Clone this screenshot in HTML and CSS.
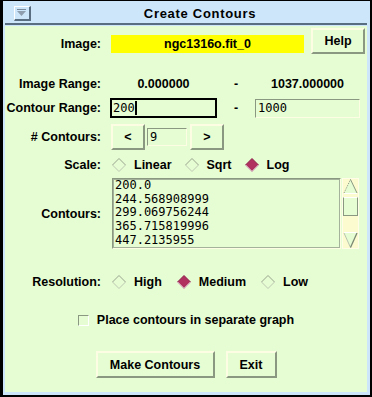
FILE: index.html
```html
<!DOCTYPE html>
<html lang="en">
<head>
    <meta charset="UTF-8">
    <title>Create Contours</title>
    <link rel="stylesheet" href="styles.css">
</head>
<body>
    <div class="frame">
        <div class="titlebar">
            <div class="menu-btn">
                <svg width="13" height="11" viewBox="0 0 13 11">
                    <rect x="2" y="2" width="9" height="1" fill="#7a8a9a"/>
                    <polygon points="2,4 11,4 6.5,9" fill="#8e9eae"/>
                </svg>
            </div>
            <div class="title">Create Contours</div>
        </div>

        <div class="panel">
            <div class="row row-image">
                <span class="label">Image:</span>
                <span class="image-name">ngc1316o.fit_0</span>
                <button class="btn btn-help">Help</button>
            </div>

            <div class="row row-range">
                <span class="label">Image Range:</span>
                <span class="value">0.000000</span>
                <span class="dash">-</span>
                <span class="value value-max">1037.000000</span>
            </div>

            <div class="row row-contour-range">
                <span class="label">Contour Range:</span>
                <span class="field field-focus">200<span class="caret"></span></span>
                <span class="dash">-</span>
                <span class="field field-max">1000</span>
            </div>

            <div class="row row-count">
                <span class="label"># Contours:</span>
                <button class="btn btn-step btn-prev">&lt;</button>
                <span class="field field-count">9</span>
                <button class="btn btn-step btn-next">&gt;</button>
            </div>

            <div class="row row-radio">
                <span class="label">Scale:</span>
                <div class="options">
                    <span class="option"><svg class="diamond" viewBox="0 0 14 14"><polyline points="0.5,7 7,0.5 13.5,7" class="d-dark"/><polyline points="0.5,7 7,13.5 13.5,7" class="d-light"/></svg>Linear</span>
                    <span class="option"><svg class="diamond" viewBox="0 0 14 14"><polyline points="0.5,7 7,0.5 13.5,7" class="d-dark"/><polyline points="0.5,7 7,13.5 13.5,7" class="d-light"/></svg>Sqrt</span>
                    <span class="option"><svg class="diamond" viewBox="0 0 14 14"><polygon points="7,0.5 13.5,7 7,13.5 0.5,7" class="d-on"/><polyline points="0.5,7 7,13.5 13.5,7" class="d-rim"/></svg>Log</span>
                </div>
            </div>

            <div class="row row-list">
                <span class="label">Contours:</span>
                <div class="list">
                    <div>200.0</div>
                    <div>244.568908999</div>
                    <div>299.069756244</div>
                    <div>365.715819996</div>
                    <div>447.2135955</div>
                </div>
                <svg class="scrollbar" width="17" height="71" viewBox="0 0 17 71">
                    <rect x="0" y="0" width="17" height="71" fill="#fbfbcf"/>
                    <rect x="0.5" y="0.5" width="16" height="70" fill="none" stroke="#fffde8"/>
                    <polygon points="8.5,1.5 15,15 2,15" fill="#e6fcd2"/>
                    <polyline points="2,15 8.5,1.5" fill="none" stroke="#8a9882" stroke-dasharray="1 1"/>
                    <polyline points="8.5,1.5 15,15" fill="none" stroke="#8a9882"/>
                    <line x1="2" y1="15.5" x2="15" y2="15.5" stroke="#ffffff"/>
                    <rect x="1.5" y="19.5" width="14" height="18" fill="#e6fcd2" stroke="#8a9882"/>
                    <line x1="1.5" y1="19.5" x2="15.5" y2="19.5" stroke="#ffffff"/>
                    <polygon points="2,55 15,55 8.5,69.5" fill="#e6fcd2"/>
                    <line x1="2" y1="54.5" x2="15" y2="54.5" stroke="#ffffff"/>
                    <polyline points="2,55 8.5,69.5" fill="none" stroke="#b8c4b0"/>
                    <polyline points="15,55 8.5,69.5" fill="none" stroke="#7a8872" stroke-width="1.3"/>
                </svg>
            </div>

            <div class="row row-radio row-res">
                <span class="label">Resolution:</span>
                <div class="options">
                    <span class="option"><svg class="diamond" viewBox="0 0 14 14"><polyline points="0.5,7 7,0.5 13.5,7" class="d-dark"/><polyline points="0.5,7 7,13.5 13.5,7" class="d-light"/></svg>High</span>
                    <span class="option"><svg class="diamond" viewBox="0 0 14 14"><polygon points="7,0.5 13.5,7 7,13.5 0.5,7" class="d-on"/><polyline points="0.5,7 7,13.5 13.5,7" class="d-rim"/></svg>Medium</span>
                    <span class="option"><svg class="diamond" viewBox="0 0 14 14"><polyline points="0.5,7 7,0.5 13.5,7" class="d-dark"/><polyline points="0.5,7 7,13.5 13.5,7" class="d-light"/></svg>Low</span>
                </div>
            </div>

            <div class="row row-check">
                <span class="checkbox"></span>
                <span>Place contours in separate graph</span>
            </div>

            <div class="row row-buttons">
                <button class="btn btn-make">Make Contours</button>
                <button class="btn btn-exit">Exit</button>
            </div>
        </div>
    </div>
</body>
</html>
```

FILE: styles.css
```css
body, html {
    margin: 0;
    padding: 0;
    background: #000;
    font-family: "Liberation Sans", Arial, sans-serif;
    color: #000;
}

.frame {
    margin: 1px 2px 0 3px;
    height: 389px;
    padding: 2px 3px 3px 2px;
    background: #cde6fa;
}

/* title bar */
.titlebar {
    height: 20px;
    display: flex;
    align-items: center;
    border-bottom: 2px solid #5a6e82;
    margin-bottom: 1px;
}

.menu-btn {
    width: 17px;
    height: 15px;
    margin-left: 9px;
    box-sizing: border-box;
    border-style: solid;
    border-width: 1px 2px 2px 1px;
    border-color: #fff #5a6e82 #5a6e82 #fff;
    display: flex;
}

.title {
    flex: 1;
    text-align: center;
    font-weight: bold;
    font-size: 13px;
    letter-spacing: 0.7px;
    padding-left: 2px;
}

/* main panel */
.panel {
    background: #e6fcd2;
    height: 366px;
    box-sizing: border-box;
    padding-top: 2px;
}

.row {
    display: flex;
    align-items: center;
    font-weight: bold;
    font-size: 12.5px;
}

.label {
    width: 96px;
    flex-shrink: 0;
    text-align: right;
}

.btn {
    box-sizing: border-box;
    padding: 0;
    border-style: solid;
    border-width: 2px;
    border-color: #fdfde4 #8a9882 #8a9882 #fdfde4;
    background: #e6fcd2;
    font: inherit;
    color: #000;
}

.field {
    box-sizing: border-box;
    display: flex;
    align-items: center;
    padding-left: 2px;
    font-family: "DejaVu Sans Mono", "Liberation Mono", monospace;
    font-weight: normal;
    font-size: 12px;
    border: 1px solid;
    border-color: #8a9882 #fdfde4 #fdfde4 #8a9882;
}

.dash {
    width: 38px;
    text-align: center;
}

/* image row */
.row-image {
    height: 26px;
    align-items: flex-start;
}

.row-image .label {
    margin-top: 7px;
    line-height: 18px;
}

.image-name {
    margin: 7px 0 0 10px;
    width: 193px;
    height: 18px;
    background: #ff0;
    display: flex;
    align-items: center;
    justify-content: center;
}

.btn-help {
    width: 54px;
    height: 26px;
    margin-left: 7px;
}

/* ranges */
.row-range {
    margin-top: 20px;
    height: 20px;
}

.value {
    width: 107px;
    margin-left: 9px;
    text-align: center;
}

.value-max {
    width: 105px;
    margin-left: 0;
}

.row-contour-range {
    margin-top: 4px;
    height: 20px;
}

.field-focus {
    margin-left: 9px;
    width: 107px;
    height: 20px;
    border: 2px solid #000;
    padding-left: 1px;
}

.caret {
    display: inline-block;
    width: 2px;
    height: 14px;
    background: #000;
}

.field-max {
    width: 105px;
    height: 19px;
}

/* contour count */
.row-count {
    margin-top: 6px;
    height: 26px;
}

.btn-step {
    width: 34px;
    height: 26px;
}

.btn-prev {
    margin-left: 10px;
}

.field-count {
    margin-left: 2px;
    width: 40px;
    height: 18px;
}

.btn-next {
    margin-left: 3px;
}

/* radio rows */
.row-radio {
    margin-top: 6px;
    height: 18px;
}

.options {
    display: flex;
    margin-left: 11px;
}

.option {
    display: flex;
    align-items: center;
    margin-right: 13px;
}

.diamond {
    width: 14px;
    height: 14px;
    margin-right: 8px;
}

.d-dark {
    fill: none;
    stroke: #96a48e;
}

.d-light {
    fill: none;
    stroke: #bcc8b4;
}

.d-on {
    fill: #b03060;
    stroke: #8a2048;
}

.d-rim {
    fill: none;
    stroke: #ffffff;
}

.row-res {
    margin-top: 24px;
}

.row-res .option {
    margin-right: 15px;
}

/* contour list */
.row-list {
    margin-top: 4px;
    height: 71px;
}

.list {
    margin-left: 11px;
    width: 229px;
    height: 71px;
    box-sizing: border-box;
    border: 1px solid;
    border-color: #8a9882 #fdfde4 #fdfde4 #8a9882;
    outline: 1px solid #a4b29c;
    outline-offset: -2px;
    padding: 0 0 0 2px;
    font-family: "DejaVu Sans Mono", "Liberation Mono", monospace;
    font-weight: normal;
    font-size: 12px;
    line-height: 13.7px;
    overflow: hidden;
}

.scrollbar {
    margin-left: 1px;
    display: block;
}

/* checkbox */
.row-check {
    margin-top: 20px;
    height: 18px;
    justify-content: center;
}

.checkbox {
    width: 11px;
    height: 11px;
    box-sizing: border-box;
    border: 1px solid;
    border-color: #8a9882 #ffffff #ffffff #8a9882;
    margin-right: 8px;
}

/* bottom buttons */
.row-buttons {
    margin-top: 22px;
    height: 27px;
    justify-content: center;
    gap: 11px;
}

.btn-make {
    width: 119px;
    height: 27px;
}

.btn-exit {
    width: 51px;
    height: 27px;
}
```
